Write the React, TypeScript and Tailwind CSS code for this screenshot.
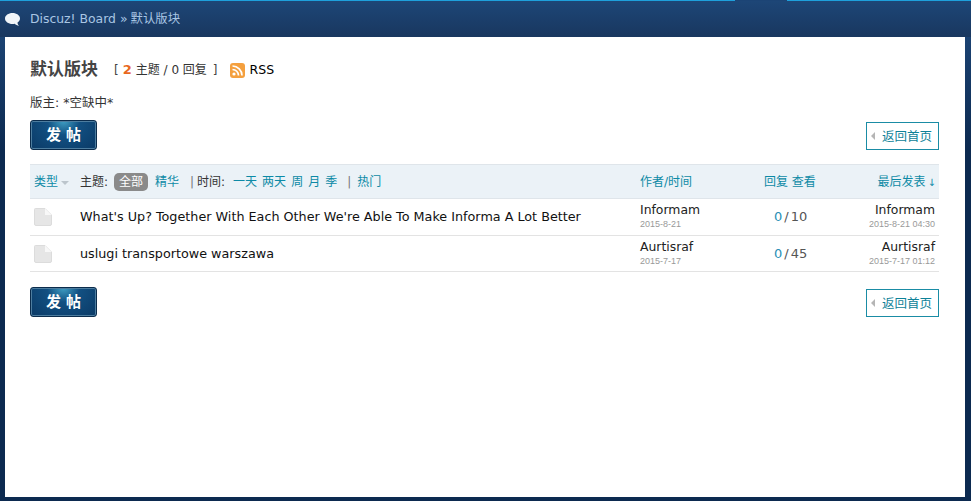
import React from 'react';

const FONT = "font-['DejaVu_Sans','Noto_Sans_CJK_SC',sans-serif]";

function PostButton() {
  return (
    <button className="flex h-[30px] w-[67px] items-center justify-center rounded-[3px] border border-[#0b2c4c] bg-[radial-gradient(ellipse_at_50%_0%,#3f9fc4_0%,#125082_35%,#0b3a66_100%)] pl-[5px] text-[15px] font-bold tracking-[5px] text-white shadow-[inset_0_0_0_1px_#4d7d9f]">
      发帖
    </button>
  );
}

function BackButton() {
  return (
    <a className="flex h-[28px] w-[73px] items-center gap-[7px] border border-[#1a8ca5] pl-[4px] text-[12.5px] text-[#0e8298]">
      <span className="h-0 w-0 border-y-[4px] border-r-[4px] border-y-transparent border-r-[#b5b5b5]" />
      <span className="whitespace-nowrap pt-[2px]">返回首页</span>
    </a>
  );
}

function FileIcon() {
  return (
    <svg width="18" height="18" viewBox="0 0 18 18">
      <path d="M1.500 0.500H11L17.500 7V16a1.500 1.500 0 0 1-1.500 1.500H2A1.500 1.500 0 0 1 .5 16V1.500a1 1 0 0 1 1-1z" fill="#e6e6e6" stroke="#dcdcdc" />
      <path d="M11 0.500V7H17.500z" fill="#f8f8f8" />
    </svg>
  );
}

function RssIcon() {
  return (
    <svg width="15" height="15" viewBox="0 0 15 15">
      <rect width="15" height="15" rx="3" fill="#f4a03f" />
      <circle cx="4" cy="11" r="1.6" fill="#fff" />
      <path d="M2.500 6.500a6 6 0 0 1 6 6M2.500 3a9.500 9.500 0 0 1 9.500 9.500" fill="none" stroke="#fff" strokeWidth="1.7" />
    </svg>
  );
}

const threads = [
  {
    title: "What's Up? Together With Each Other We're Able To Make Informa A Lot Better",
    author: 'Informam',
    date: '2015-8-21',
    views: 10,
    last: '2015-8-21 04:30',
    height: 'h-[37px]',
  },
  {
    title: 'uslugi transportowe warszawa',
    author: 'Aurtisraf',
    date: '2015-7-17',
    views: 45,
    last: '2015-7-17 01:12',
    height: 'h-[36px]',
  },
];

export default function App() {
  return (
    <div className={`${FONT} flex h-[501px] w-[971px] flex-col overflow-hidden bg-[linear-gradient(#1b4272_37px,#0c2a50_150px)] text-[12px] text-[#333]`}>
      {/* top bar */}
      <div className="flex h-px shrink-0">
        <div className="w-[735px] bg-[#1ea0dc]" />
        <div className="w-[52px] bg-[#1c4475]" />
        <div className="flex-1 bg-[#1ea0dc]" />
      </div>
      <div className="flex h-[36px] shrink-0 items-center bg-[linear-gradient(#1d4677,#19375f)] pl-[5px] text-[12.4px] text-[#a9c6e4]">
        <svg width="15" height="13" viewBox="0 0 15 13">
          <path d="M7.500 0C11.600 0 15 2.400 15 5.500c0 1.700-1 3.200-2.600 4.200.2 1.200.8 2.200 1.600 3-1.700-.2-3.300-1-4.300-2-.7.2-1.400.3-2.200.3C3.400 11 0 8.600 0 5.500S3.400 0 7.500 0z" fill="#f1f5f9" />
        </svg>
        <span className="ml-[10px]">Discuz! Board</span>
        <span className="ml-[4px]">»</span>
        <span className="ml-[3px]">默认版块</span>
      </div>

      {/* panel */}
      <div className="ml-[5px] mr-[6px] h-[460px] bg-white pl-[25px] pr-[26px] pt-[23px]">
        <div className="flex h-[20px] items-center">
          <h1 className="text-[17px] font-bold text-[#444]">默认版块</h1>
          <span className="ml-[16px] text-[#444]">[</span>
          <span className="ml-[4px] text-[13px] font-bold text-[#e8691f]">2</span>
          <span className="ml-[4px]">主题 / 0 回复</span>
          <span className="ml-[6px] text-[#444]">]</span>
          <span className="ml-[12px]"><RssIcon /></span>
          <span className="ml-[5px] text-[12.5px] text-black">RSS</span>
        </div>

        <div className="mt-[15px] h-[16px] text-[12.5px] leading-[16px]">版主: *空缺中*</div>

        <div className="mt-[9px] flex items-end justify-between">
          <PostButton />
          <BackButton />
        </div>

        {/* thread header */}
        <div className="mt-[14px] flex h-[35px] items-center border-y border-[#dfe5ea] bg-[#ebf2f7] pl-[4px] pt-[1px] text-[#0d8aa6]">
          <span>类型</span>
          <span className="ml-[3px] mt-[2px] h-0 w-0 border-x-[4px] border-t-[4px] border-x-transparent border-t-[#bcc5cc]" />
          <span className="ml-[11px] w-[30px] text-[#333]">主题:</span>
          <span className="ml-[4px] rounded-[5px] bg-[#8a8a8a] px-[5px] leading-[18px] text-white">全部</span>
          <span className="ml-[7px]">精华</span>
          <span className="ml-[11px] text-[#777]">|</span>
          <span className="ml-[3px] w-[32px] text-[#333]">时间:</span>
          <span className="ml-[4px]">一天</span>
          <span className="ml-[5px]">两天</span>
          <span className="ml-[5px]">周</span>
          <span className="ml-[5px]">月</span>
          <span className="ml-[5px]">季</span>
          <span className="ml-[10px] text-[#777]">|</span>
          <span className="ml-[6px]">热门</span>
          <span className="ml-auto w-[110px]">作者/时间</span>
          <span className="w-[100px] pl-[14px]">回复 查看</span>
          <span className="flex w-[89px] items-center justify-end gap-[2px] pr-[3px]">最后发表<span className="text-[10px]">↓</span></span>
        </div>

        {threads.map((t) => (
          <div key={t.author} className={`flex ${t.height} items-center border-b border-[#e3e3e3]`}>
            <span className="ml-[4px] w-[46px]"><FileIcon /></span>
            <span className="flex-1 text-[12.75px] text-[#111]">{t.title}</span>
            <div className="w-[110px]">
              <div className="text-[12.4px] leading-[14px] text-[#222]">{t.author}</div>
              <div className="font-['Liberation_Sans',sans-serif] text-[9px] leading-[14px] text-[#999]">{t.date}</div>
            </div>
            <div className="flex w-[100px] items-center pl-[24px] text-[13px] text-[#555]">
              <span className="text-[#2a8fb5]">0</span>
              <span className="ml-[2px]">/</span>
              <span className="ml-[2px]">{t.views}</span>
            </div>
            <div className="w-[89px] pr-[4px] text-right">
              <div className="text-[12.4px] leading-[14px] text-[#222]">{t.author}</div>
              <div className="whitespace-nowrap font-['Liberation_Sans',sans-serif] text-[9px] leading-[14px] text-[#999]">{t.last}</div>
            </div>
          </div>
        ))}

        <div className="mt-[15px] flex items-end justify-between">
          <PostButton />
          <BackButton />
        </div>
      </div>
    </div>
  );
}
